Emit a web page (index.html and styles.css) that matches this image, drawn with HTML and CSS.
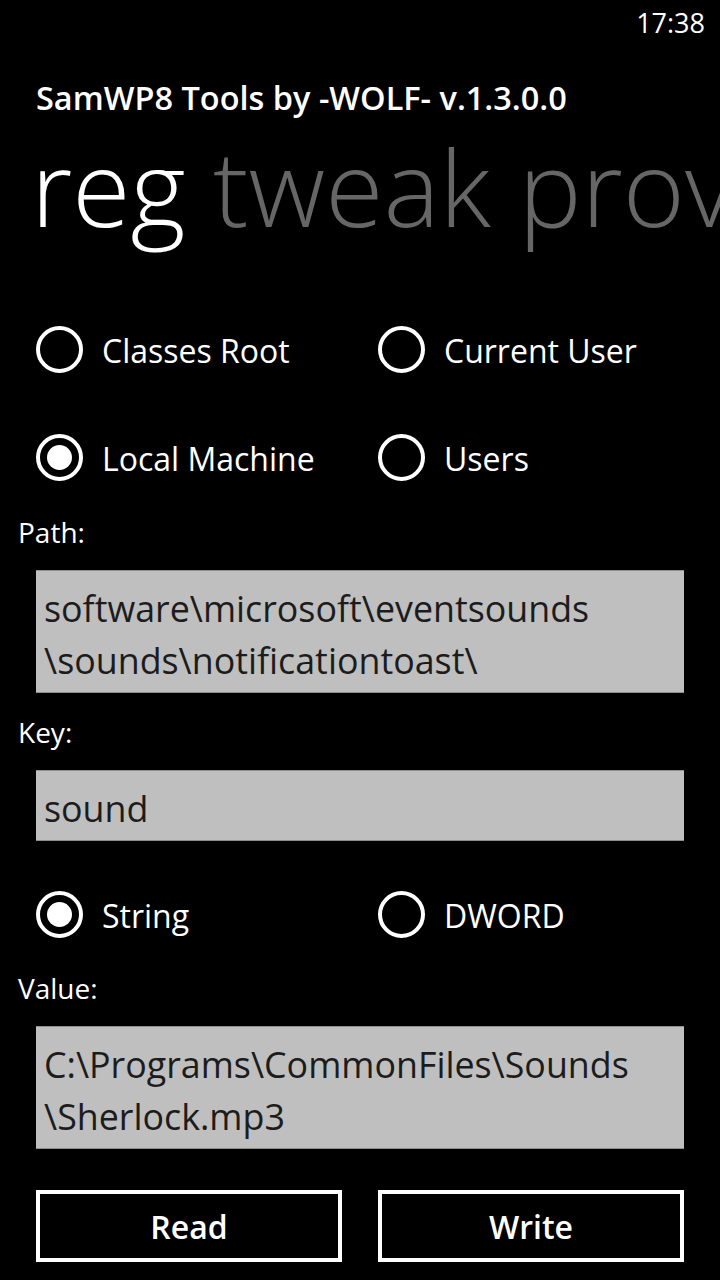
FILE: index.html
```html
<!DOCTYPE html>
<html>
<head>
<meta charset="utf-8">
<link rel="stylesheet" href="styles.css">
</head>
<body>
<div class="phone">
  <div class="status"><span class="time">17:38</span></div>
  <div class="app-title">SamWP8 Tools by -WOLF- v.1.3.0.0</div>
  <div class="pivot"><span class="pivot-item active">reg</span> <span class="pivot-item">tweak</span> <span class="pivot-item">prov</span></div>

  <div class="radios hive">
    <label class="radio"><span class="circle"></span><span class="radio-text">Classes Root</span></label>
    <label class="radio"><span class="circle"></span><span class="radio-text">Current User</span></label>
    <label class="radio"><span class="circle checked"></span><span class="radio-text">Local Machine</span></label>
    <label class="radio"><span class="circle"></span><span class="radio-text">Users</span></label>
  </div>

  <div class="field-label label-path">Path:</div>
  <div class="textbox multi">software\microsoft\eventsounds<br>\sounds\notificationtoast\</div>

  <div class="field-label label-key">Key:</div>
  <div class="textbox">sound</div>

  <div class="radios type">
    <label class="radio"><span class="circle checked"></span><span class="radio-text">String</span></label>
    <label class="radio"><span class="circle"></span><span class="radio-text">DWORD</span></label>
  </div>

  <div class="field-label label-value">Value:</div>
  <div class="textbox multi">C:\Programs\CommonFiles\Sounds<br>\Sherlock.mp3</div>

  <div class="buttons">
    <div class="button">Read</div>
    <div class="button">Write</div>
  </div>
</div>
</body>
</html>
```
FILE: styles.css
```css
html, body {
  margin: 0;
  padding: 0;
  background: #000;
}
body {
  font-family: "Open Sans", "Noto Sans", sans-serif;
  color: #fff;
}
.phone {
  width: 720px;
  height: 1280px;
  overflow: hidden;
  background: #000;
}
.status {
  height: 42px;
  display: flex;
  justify-content: flex-end;
  padding-right: 15px;
  box-sizing: border-box;
}
.time {
  font-size: 27px;
  line-height: 40px;
  padding-top: 3px;
  font-weight: 400;
}
.app-title {
  margin-top: 36px;
  padding-left: 36px;
  font-size: 32.5px;
  line-height: 40px;
  font-weight: 600;
  white-space: nowrap;
}
.pivot {
  margin-top: 8px;
  height: 120px;
  padding-left: 31px;
  font-size: 106px;
  line-height: 120px;
  font-weight: 300;
  white-space: nowrap;
  overflow-x: clip;
  overflow-y: visible;
  color: #666;
}
.pivot-item.active {
  color: #fff;
}
.radios {
  display: grid;
  grid-template-columns: 342px 1fr;
  grid-auto-rows: 108px;
  padding-left: 36px;
}
.hive {
  margin-top: 49px;
}
.type {
  margin-top: 19px;
}
.radio {
  display: flex;
  align-items: center;
  gap: 19px;
}
.circle {
  width: 47px;
  height: 47px;
  box-sizing: border-box;
  border: 4px solid #fff;
  border-radius: 50%;
  display: flex;
  align-items: center;
  justify-content: center;
  flex: none;
}
.circle.checked::after {
  content: "";
  width: 25px;
  height: 25px;
  border-radius: 50%;
  background: #fff;
}
.radio-text {
  font-size: 32px;
  line-height: 44px;
  padding-top: 4px;
}
.field-label {
  padding-left: 18px;
  font-size: 28px;
  line-height: 36px;
}
.label-path {
  margin-top: 3px;
}
.label-key {
  margin-top: 21px;
}
.label-value {
  margin-top: 2px;
}
.textbox {
  margin: 20px 0 0 36px;
  width: 648px;
  box-sizing: border-box;
  background: #bfbfbf;
  border-top: 1px solid #8e8e8e;
  border-bottom: 1px solid #8e8e8e;
  color: #1c1c1c;
  font-size: 35.8px;
  line-height: 52px;
  padding: 11px 8px 6px 8px;
  white-space: nowrap;
  overflow: hidden;
}
.buttons {
  margin-top: 41px;
  padding-left: 36px;
  display: grid;
  grid-template-columns: 306px 306px;
  column-gap: 36px;
}
.button {
  height: 72px;
  box-sizing: border-box;
  border: 4px solid #fff;
  display: flex;
  align-items: center;
  justify-content: center;
  font-size: 32px;
  font-weight: 600;
}
```
